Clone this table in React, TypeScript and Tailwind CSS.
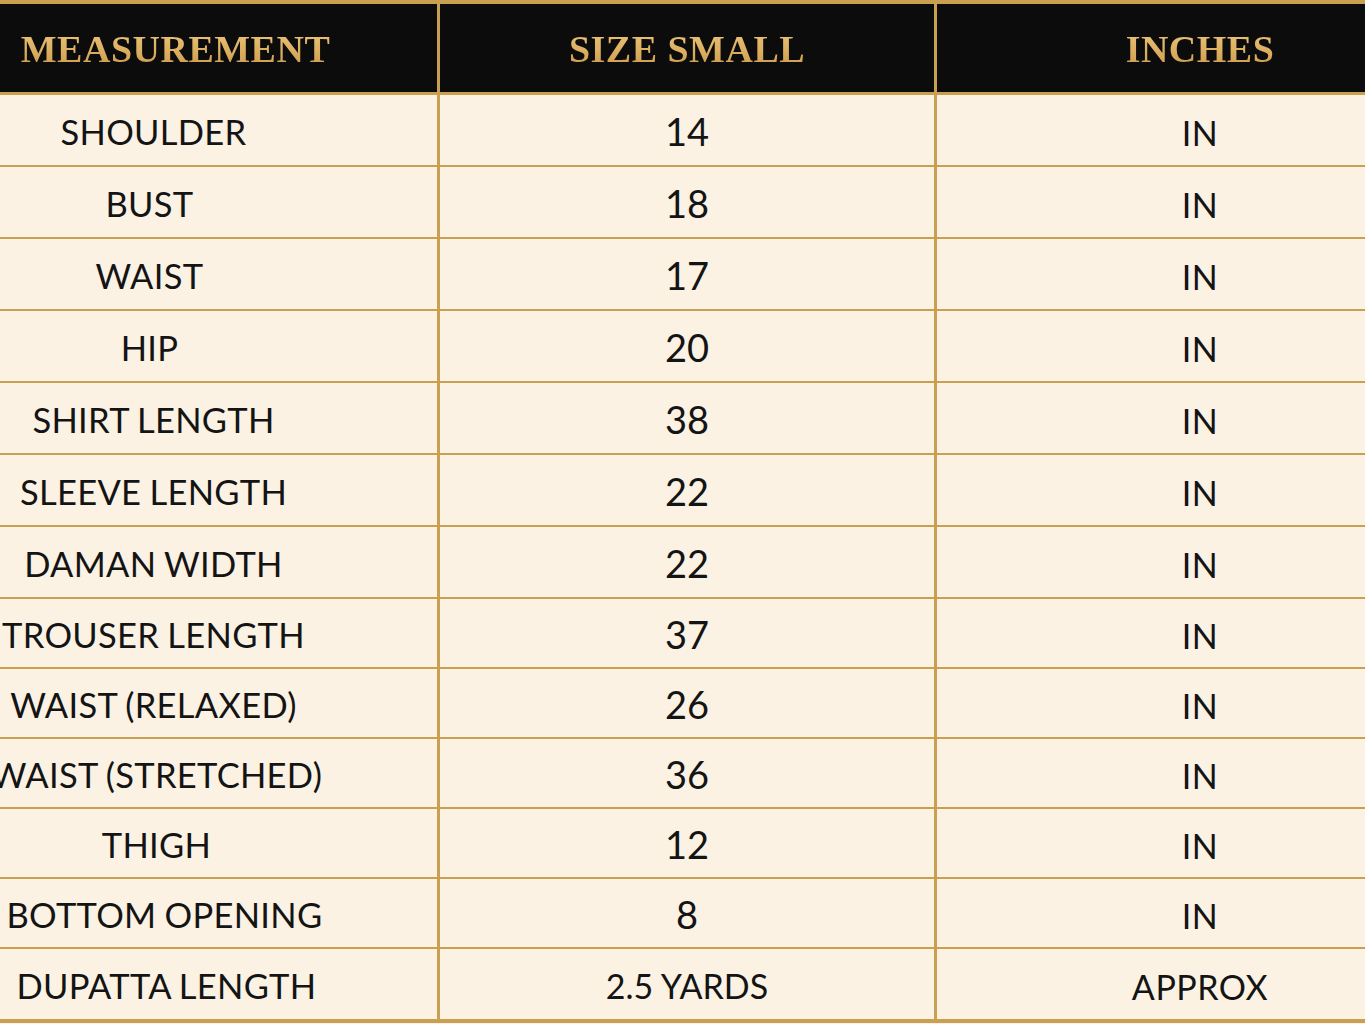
const ROWS = [
  { name: "SHOULDER", size: "14", unit: "IN", shift: "" },
  { name: "BUST", size: "18", unit: "IN", shift: "pr-[8px]" },
  { name: "WAIST", size: "17", unit: "IN", shift: "pr-[8px]" },
  { name: "HIP", size: "20", unit: "IN", shift: "pr-[8px]" },
  { name: "SHIRT LENGTH", size: "38", unit: "IN", shift: "" },
  { name: "SLEEVE LENGTH", size: "22", unit: "IN", shift: "" },
  { name: "DAMAN WIDTH", size: "22", unit: "IN", shift: "" },
  { name: "TROUSER LENGTH", size: "37", unit: "IN", shift: "" },
  { name: "WAIST (RELAXED)", size: "26", unit: "IN", shift: "" },
  { name: "WAIST (STRETCHED)", size: "36", unit: "IN", shift: "pl-[6px]" },
  { name: "THIGH", size: "12", unit: "IN", shift: "pl-[6px]" },
  { name: "BOTTOM OPENING", size: "8", unit: "IN", shift: "pl-[22px]" },
  { name: "DUPATTA LENGTH", size: "2.5 YARDS", unit: "APPROX", shift: "pl-[26px]" },
];

const cols = "grid grid-cols-[570px_497px_523px]";

function Gold({ children }: { children: string }) {
  return (
    <span className="bg-linear-to-b from-[#f0cd85] via-[#ddb062] to-[#c4913f] bg-clip-text text-transparent">
      {children}
    </span>
  );
}

export default function App() {
  return (
    <div className="w-[1365px] h-[1024px] overflow-hidden bg-[#faf1e3]">
      <div className="-ml-[130px] w-[1590px] border-t-4 border-b-4 border-[#c9a052]">
        {/* header */}
        <div
          className={`${cols} h-[91px] bg-[#0c0c0c] border-b-[3px] border-[#c9a052] font-['Liberation_Serif',serif] font-bold text-[38px] tracking-[0.5px]`}
        >
          <div className="flex items-center justify-center pl-[44px] pt-[2px] border-r-[3px] border-[#c9a052]">
            <Gold>MEASUREMENT</Gold>
          </div>
          <div className="flex items-center justify-center pt-[2px] border-r-[3px] border-[#c9a052]">
            <Gold>SIZE SMALL</Gold>
          </div>
          <div className="flex items-center justify-center pt-[2px] pl-[3px]">
            <Gold>INCHES</Gold>
          </div>
        </div>

        {/* body */}
        {ROWS.map((r, i) => (
          <div
            key={r.name}
            className={`${cols} ${i < 7 ? "h-[72px]" : "h-[70px]"} ${i < ROWS.length - 1 ? "border-b-2" : ""} border-[#c9a052] bg-[#fbf2e4] text-[#141414] font-['Lato','Open_Sans',sans-serif]`}
          >
            <div
              className={`flex items-center justify-center pt-[4px] border-r-[3px] border-[#c9a052] text-[34.5px] tracking-[0.3px] [word-spacing:-1px] whitespace-nowrap ${r.shift}`}
            >
              {r.name}
            </div>
            <div
              className={`flex items-center justify-center pt-[3px] border-r-[3px] border-[#c9a052] whitespace-nowrap ${r.size.length > 3 ? "text-[34px]" : "text-[38px]"}`}
            >
              {r.size}
            </div>
            <div className="flex items-center justify-center pt-[4px] pl-[3px] text-[34px] tracking-[0.5px]">
              {r.unit}
            </div>
          </div>
        ))}
      </div>
    </div>
  );
}
